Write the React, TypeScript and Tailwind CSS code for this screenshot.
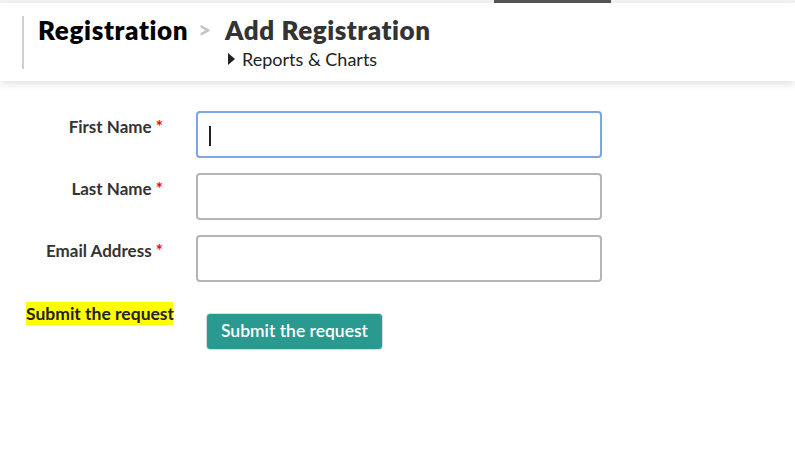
import React from 'react';

const fields = [
    { id: 'first', label: 'First Name', focused: true },
    { id: 'last', label: 'Last Name', focused: false },
    { id: 'email', label: 'Email Address', focused: false },
];

export default function App() {
    return (
        <div className="min-h-[474px] w-[795px] bg-white font-['Lato',sans-serif] text-[#333]">
            {/* top strip */}
            <div className="h-[3px] bg-[#f3f3f3] pl-[494px]">
                <div className="h-[3px] w-[117px] bg-[#555]" />
            </div>

            <header className="h-[78px] bg-white pl-[22px] pt-[13px] shadow-[0_3px_8px_rgba(0,0,0,0.12)]">
                <div className="flex h-[53px] border-l-2 border-[#d0d0d0] pl-[14px]">
                    <div className="flex flex-col">
                        <div className="flex items-center leading-[28px]">
                            <h1 className="text-[26px] font-extrabold tracking-[0.65px] text-black">Registration</h1>
                            <span className="ml-[10px] mr-[14px] text-[22px] font-black text-[#c4c4c4]">&gt;</span>
                            <h2 className="text-[26px] font-extrabold tracking-[0.55px] text-[#333]">Add Registration</h2>
                        </div>
                        <div className="ml-[190px] mt-[4px] flex items-center text-[18px] leading-[22px] text-[#222]">
                            <span className="mr-[7px] h-0 w-0 border-y-[6px] border-l-[7px] border-y-transparent border-l-[#222]" />
                            Reports &amp; Charts
                        </div>
                    </div>
                </div>
            </header>

            <form className="pt-[30px]">
                <div className="flex flex-col gap-[15px]">
                    {fields.map((f) => (
                        <div key={f.id} className="flex items-start">
                            <label
                                htmlFor={f.id}
                                className="w-[163px] pt-[6px] text-right text-[17px] font-bold leading-[20px] text-[#333]"
                            >
                                {f.label} <span className="text-[#ff0000]">*</span>
                            </label>
                            <div className="relative ml-[33px]">
                                <input
                                    id={f.id}
                                    type="text"
                                    className={`h-[47px] w-[406px] rounded-[4px] border-2 bg-white px-3 outline-none ${
                                        f.focused ? 'border-[#7aa5e6]' : 'border-[#b5b5b5]'
                                    }`}
                                />
                                {f.focused && <span className="absolute left-[13px] top-[15px] h-[20px] w-[1.5px] bg-[#222]" />}
                            </div>
                        </div>
                    ))}
                </div>

                <div className="mt-[20px] flex items-start">
                    <div className="ml-[26px] w-[147px] whitespace-nowrap bg-[#ffff00] text-[17.5px] font-bold leading-[23px] text-[#222]">
                        Submit the request
                    </div>
                    <button
                        type="button"
                        className="ml-[33px] mt-[11px] h-[37px] w-[177px] rounded-[4px] border border-[#ddd] bg-[#2a9990] text-[17.5px] font-semibold text-white"
                    >
                        Submit the request
                    </button>
                </div>
            </form>
        </div>
    );
}
